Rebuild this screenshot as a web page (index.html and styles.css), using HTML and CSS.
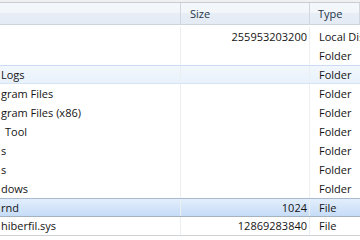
FILE: index.html
```html
<!DOCTYPE html>
<html lang="en">
<head>
<meta charset="UTF-8">
<title>Files</title>
<link rel="stylesheet" href="styles.css">
</head>
<body>
<div class="list">
  <div class="topline"></div>
  <div class="row head">
    <div class="cell name"></div>
    <div class="cell size">Size</div>
    <div class="cell type">Type</div>
  </div>
  <div class="rows">
    <div class="row"><div class="cell name"></div><div class="cell size num">255953203200</div><div class="cell type">Local Disk</div></div>
    <div class="row"><div class="cell name"></div><div class="cell size num"></div><div class="cell type">Folder</div></div>
    <div class="row hover"><div class="cell name">Logs</div><div class="cell size num"></div><div class="cell type">Folder</div></div>
    <div class="row"><div class="cell name">gram Files</div><div class="cell size num"></div><div class="cell type">Folder</div></div>
    <div class="row"><div class="cell name">gram Files (x86)</div><div class="cell size num"></div><div class="cell type">Folder</div></div>
    <div class="row"><div class="cell name indent">Tool</div><div class="cell size num"></div><div class="cell type">Folder</div></div>
    <div class="row"><div class="cell name">s</div><div class="cell size num"></div><div class="cell type">Folder</div></div>
    <div class="row"><div class="cell name">s</div><div class="cell size num"></div><div class="cell type">Folder</div></div>
    <div class="row"><div class="cell name">dows</div><div class="cell size num"></div><div class="cell type">Folder</div></div>
    <div class="row selected"><div class="cell name">rnd</div><div class="cell size num">1024</div><div class="cell type">File</div></div>
    <div class="row last"><div class="cell name">hiberfil.sys</div><div class="cell size num">12869283840</div><div class="cell type">File</div></div>
  </div>
</div>
</body>
</html>
```

FILE: styles.css
```css
body{margin:0;background:#fff;font-family:"Open Sans","Noto Sans",sans-serif;font-size:11px;color:#141414;overflow:hidden}
.list{width:360px;height:240px;overflow:hidden}
.topline{height:2px;background:#eef0f2;border-bottom:1px solid #c9ccd0}

.row{display:grid;grid-template-columns:181px 129px 1fr;height:19px;line-height:19px;box-sizing:border-box}
.cell{white-space:nowrap;overflow:hidden;box-sizing:border-box}
.cell.name,.cell.size{border-right:1px solid #eceff2}
.cell.name{padding-left:1px}
.cell.name.indent{padding-left:5px}
.cell.size{padding-right:2px}
.cell.num{text-align:right}
.cell.type{padding-left:9px}

/* header */
.row.head{height:22px;line-height:21px;background:linear-gradient(#f4f7fb 0,#f2f6fa 45%,#e6edf5 50%,#e4ebf4 100%);border-bottom:1px solid #cfd4da;color:#23364a}
.row.head .cell{border-right:1px solid #d3d8de}
.row.head .cell.size{text-align:left;padding-left:9px}
.row.head .cell.type{padding-left:8px}

.rows{padding-top:2px}

.row.hover{background:linear-gradient(#f2f7fd,#e8f1fb);border-top:1px solid #c9dcf2;border-bottom:1px solid #d6e4f4;line-height:17px}
.row.selected{background:linear-gradient(#e2eefc,#c6dcf7);border-top:1px solid #a9bad0;border-bottom:1px solid #a7b2bf;line-height:17px}
.row.last{border-bottom:1px solid #d0d3d6;line-height:18px}
```
